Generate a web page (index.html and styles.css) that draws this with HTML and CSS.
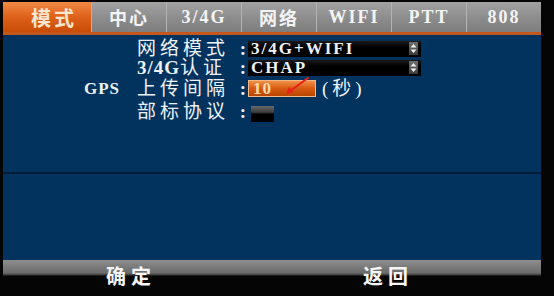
FILE: index.html
```html
<!DOCTYPE html>
<html lang="zh-CN">
<head>
<meta charset="UTF-8" />
<title>网络设置</title>
<link rel="stylesheet" href="styles.css">
</head>
<body>

<div class="screen">
  <!-- Top tabs -->
  <div class="tabs">
    <div class="tab active">模式</div>
    <div class="tab">中心</div>
    <div class="tab">3/4G</div>
    <div class="tab">网络</div>
    <div class="tab">WIFI</div>
    <div class="tab">PTT</div>
    <div class="tab">808</div>
  </div>

  <div class="panel">
    <div class="form">
      <span class="prefix"></span>
      <label class="label"><span>网络模式</span><span>:</span></label>
      <div class="select">
        <span>3/4G+WIFI</span>
        <svg class="spin" width="9" height="13" viewBox="0 0 9 13"><path d="M1.5 5.5 4.5 2 7.5 5.5ZM1.5 7.5 4.5 11 7.5 7.5Z" fill="#eee" /></svg>
      </div>

      <span class="prefix"></span>
      <label class="label"><span><em>3/4G</em>认证</span><span>:</span></label>
      <div class="select">
        <span>CHAP</span>
        <svg class="spin" width="9" height="13" viewBox="0 0 9 13"><path d="M1.5 5.5 4.5 2 7.5 5.5ZM1.5 7.5 4.5 11 7.5 7.5Z" fill="#eee" /></svg>
      </div>

      <span class="prefix">GPS</span>
      <label class="label"><span>上传间隔</span><span>:</span></label>
      <div class="field">
        <span class="input">10</span>
        <span class="unit">(秒)</span>
        <svg class="arrow" width="26" height="18" viewBox="0 0 26 18">
          <line x1="24" y1="1" x2="6" y2="14" stroke="#e8201a" stroke-width="2" stroke-linecap="round" />
          <polygon points="2,17 5,10 10,15" fill="#e8201a" />
        </svg>
      </div>

      <span class="prefix"></span>
      <label class="label"><span>部标协议</span><span>:</span></label>
      <div class="field"><span class="check"></span></div>
    </div>
    <div class="blank"></div>
  </div>

  <div class="footer">
    <span class="btn ok">确定</span>
    <span class="btn back">返回</span>
  </div>
</div>

</body>
</html>
```

FILE: styles.css
```css
body {
  margin: 0;
  background: #050505;
  font-family: 'Liberation Serif', 'Noto Sans CJK SC', serif;
  color: #eef2f6;
}
.screen {
  width: 538px;
  height: 296px;
  margin-left: 3px;
  display: flex;
  flex-direction: column;
}
.tabs {
  display: flex;
  height: 30px;
  margin-top: 2px;
  border-bottom: 3px solid #c4581c;
}
.tab {
  flex: 1;
  display: flex;
  align-items: center;
  justify-content: center;
  background: linear-gradient(#a2a2a2, #8a8a8a 60%, #7e7e7e);
  border-left: 1px solid #b4b4b4;
  font-size: 18px;
  font-weight: 700;
  letter-spacing: 2px;
  color: #f4f4f4;
}
.tab.active {
  border-left: none;
  padding-left: 14px;
  background: linear-gradient(#f08a48, #e0641c 45%, #c84c06);
  color: #fbe6cf;
  font-size: 20px;
  letter-spacing: 3px;
}
.panel {
  flex: 1;
  background: #02335f;
  display: flex;
  flex-direction: column;
}
.form {
  height: 139px;
  border-bottom: 2px solid #011c36;
  display: grid;
  grid-template-columns: 53px 111px auto;
  grid-template-rows: 19px 19px 23px 22px;
  align-items: center;
  padding: 4px 0 0 81px;
  box-sizing: border-box;
}
.prefix {
  font-size: 17px;
  font-weight: 700;
  letter-spacing: 1px;
  line-height: 17px;
}
.label {
  display: flex;
  justify-content: space-between;
  font-size: 19px;
  letter-spacing: 4px;
  line-height: 17px;
}
.label em {
  font-style: normal;
  font-weight: 700;
  letter-spacing: 1px;
}
.label span:last-child {
  font-weight: 700;
  letter-spacing: 0;
  margin-right: 2px;
}
.select {
  width: 170px;
  height: 16px;
  background: linear-gradient(#1a1a1a, #000 40%);
  display: flex;
  align-items: center;
  justify-content: space-between;
  font-size: 17px;
  font-weight: 700;
  letter-spacing: 2px;
  line-height: 15px;
  padding-left: 3px;
}
.spin {
  margin-right: 3px;
  background: linear-gradient(#707070, #3c3c3c);
}
.field {
  position: relative;
  display: flex;
  align-items: center;
}
.input {
  width: 62px;
  height: 15px;
  padding-left: 4px;
  background: linear-gradient(#f09048, #d85a12 50%, #b84600);
  border: 1px solid #f4b888;
  color: #fbdcae;
  font-size: 17px;
  font-weight: 700;
  line-height: 15px;
  letter-spacing: 1px;
}
.unit {
  margin-left: 6px;
  font-size: 19px;
  letter-spacing: 4px;
  line-height: 17px;
}
.arrow {
  position: absolute;
  left: 36px;
  top: -3px;
}
.check {
  width: 23px;
  height: 16px;
  margin: 6px 0 0 3px;
  background: linear-gradient(#6a6a6a, #3a3a3a 40%, #000 50%);
}
.blank {
  flex: 1;
}
.footer {
  height: 36px;
  background: linear-gradient(#8e8e8e, #6a6a6a 13px, #3a3a3a 15px, #050505 16px);
  display: flex;
  align-items: flex-start;
  padding-top: 6px;
  box-sizing: border-box;
}
.btn {
  font-size: 20px;
  font-weight: 700;
  letter-spacing: 5px;
  line-height: 22px;
  color: #f6f6f6;
}
.ok {
  margin-left: 103px;
}
.back {
  margin-left: 207px;
}
```
